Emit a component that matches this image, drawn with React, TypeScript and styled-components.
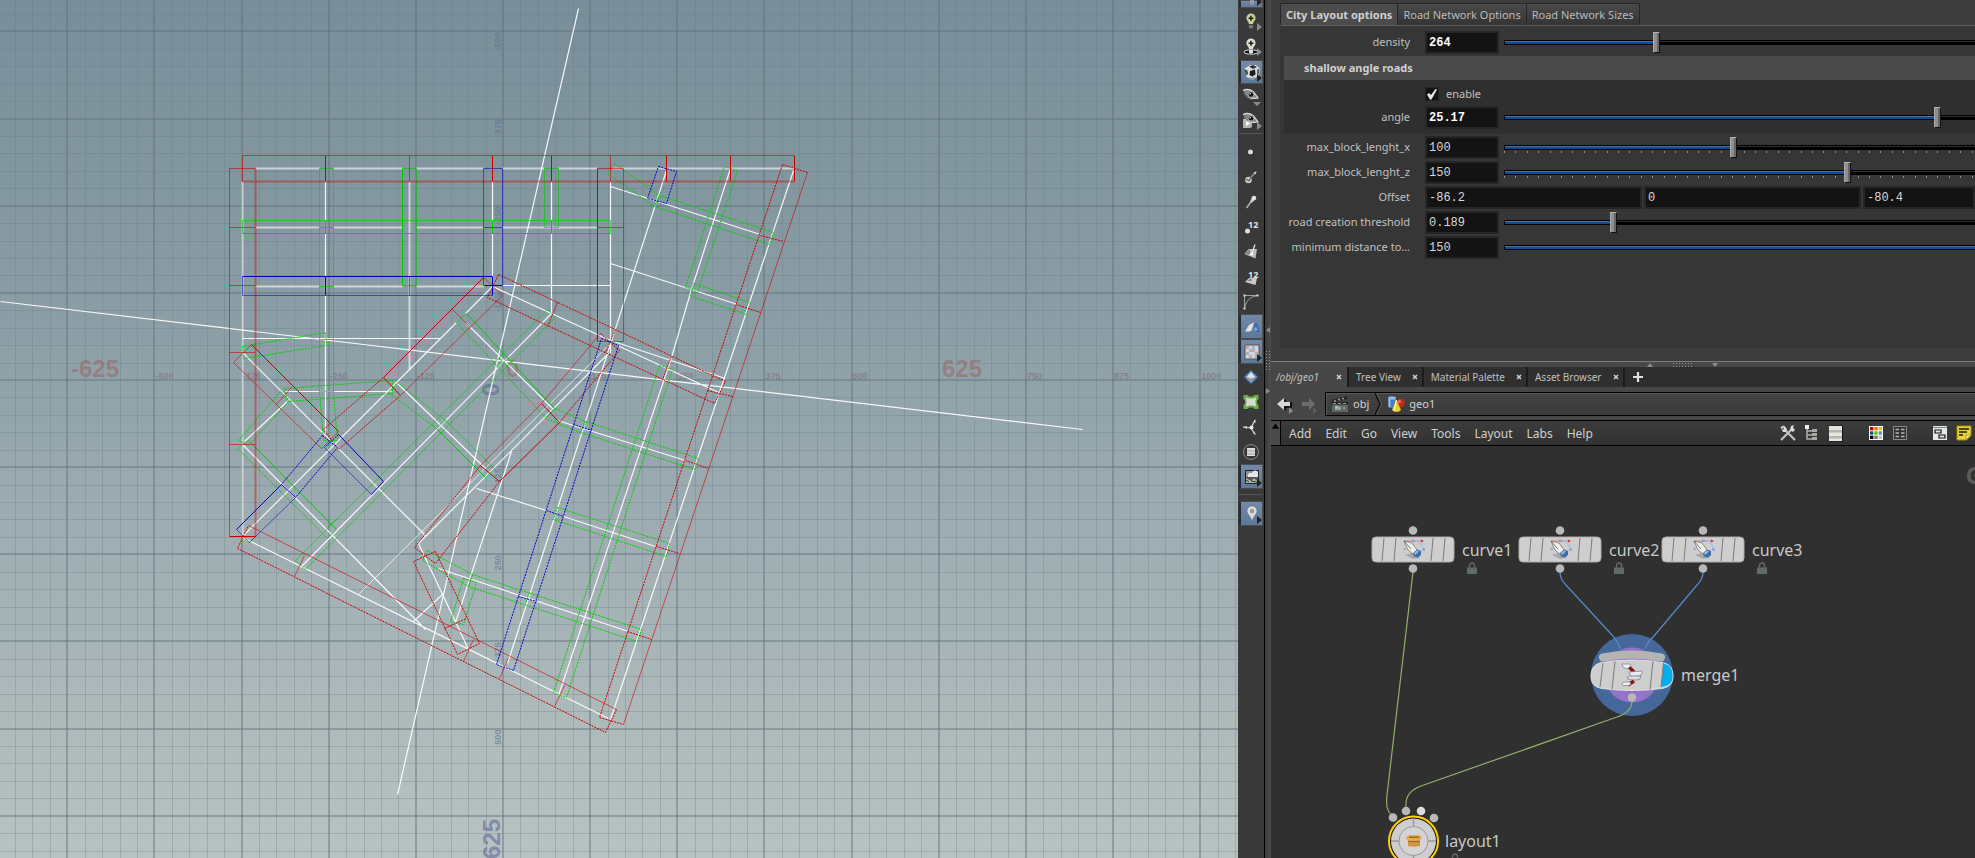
import React from "react";
import styled, { createGlobalStyle, css } from "styled-components";

const GlobalStyle = createGlobalStyle`
  *, *::before, *::after { box-sizing: border-box; }
  body { margin: 0; background: #3a3a3a; overflow: hidden; }
  button, input { font: inherit; color: inherit; margin: 0; }
`;

const ui = `"Noto Sans", "Open Sans", sans-serif`;
const mono = `"Liberation Mono", monospace`;

/* ------------------------------------------------------------------ */
/* Shell                                                               */
/* ------------------------------------------------------------------ */

const Shell = styled.div`
  display: flex;
  height: 100vh;
  overflow: hidden;
  font-family: ${ui};
  font-size: 11px;
  line-height: 16px;
  color: #c0c0c0;
`;

const Viewport = styled.main`
  flex: 1238 1 0;
  min-width: 0;
  background: linear-gradient(#788e9a 0%, #7f949d 15%, #899ca3 33%, #93a4ab 48%, #a1afb4 65%, #aebaba 84%, #b8c2c2 100%);
`;

const Scene = styled.svg`
  display: block;
  width: 100%;
  height: 100%;
`;

const SidePanes = styled.div`
  flex: 704 1 0;
  min-width: 0;
  display: flex;
  flex-direction: column;
`;

/* ------------------------------------------------------------------ */
/* Scene view                                                          */
/* ------------------------------------------------------------------ */

type Pt = [number, number];
const STEP = 87.15;
const OX = 503;
const OY = 380;

const gridLines = (origin: number, max: number) => {
  const out: { at: number; major: boolean }[] = [];
  for (let i = -40; i < 60; i++) {
    const at = Math.round(origin + (i * STEP) / 5);
    if (at >= 0 && at <= max) out.push({ at, major: i % 5 === 0 });
  }
  return out;
};

const path = (pts: Pt[], close = false) =>
  "M" + pts.map((p) => p.join(" ")).join("L") + (close ? "Z" : "");

const seg = (x1: number, y1: number, x2: number, y2: number) => path([[x1, y1], [x2, y2]]);

const whiteThin = [
  seg(325, 181, 325, 433), seg(492, 181, 492, 285), seg(551, 181, 551, 313),
  seg(0, 301, 1082, 429), seg(578, 8, 397, 794),
  seg(492, 286, 465, 313), seg(456, 322, 242, 536),
  seg(242, 352, 426, 536), seg(242, 444, 425, 629),
  seg(551, 313, 300, 567), seg(466, 323, 553, 409), seg(397, 383, 485, 468),
  seg(285, 391, 391, 391), seg(288, 400, 244, 441),
  seg(418, 543, 608, 353), seg(418, 543, 468, 649), seg(242, 537, 608, 718),
  seg(413, 621, 443, 593), seg(476, 488, 546, 510), seg(563, 516, 655, 546),
  seg(511, 451, 455, 622), seg(666, 170, 507, 663),
  path([[730, 168], [691, 289], [671, 357], [558, 695]]),
  seg(793, 170, 610, 719), seg(610, 186, 760, 234), seg(610, 263, 737, 304),
  seg(492, 286, 610, 340), seg(610, 340, 725, 378), seg(617, 345, 718, 392),
  seg(557, 420, 685, 460), seg(438, 568, 628, 631), seg(242, 338, 440, 338),
  seg(502, 285, 610, 285), seg(610, 181, 610, 353),
].join("");

const whiteSoft = [
  ...[168, 227, 286].map((y) =>
    [[255, 319], [333, 402], [416, 483]].map(([a, b]) => seg(a, y, b, y)).join("")
  ),
  seg(502, 168, 544, 168), seg(558, 168, 597, 168), seg(612, 168, 794, 168),
  seg(502, 227, 597, 227),
  seg(242, 181, 242, 535), seg(409, 181, 409, 369),
].join("");

const whiteFaint = seg(358, 594, 610, 343);

const redSolid = [
  ...[325, 492, 551, 666, 730, 794].map((x) => seg(x, 155, x, 181)),
  seg(229, 536, 255, 536), seg(597, 168, 597, 341), seg(483, 277, 383, 377),
  seg(383, 377, 400, 395), seg(251, 344, 338, 431), seg(541, 403, 559, 422),
  seg(559, 422, 499, 481), seg(480, 465, 499, 481),
].join("");

const redSoft = [
  seg(242, 155, 794, 155), seg(242, 155, 242, 181), seg(409, 155, 409, 181), seg(610, 155, 610, 181),
  seg(229, 168, 229, 536), seg(229, 168, 255, 168),
  ...[227, 285, 352, 444].map((y) => seg(229, y, 255, y)),
  path([[597, 168], [623, 168], [623, 341], [597, 341]]), seg(597, 227, 623, 227),
  seg(807, 172, 623, 724), seg(248, 525, 616, 709),
  path([[483, 277], [502, 295], [400, 395]]), seg(452, 309, 470, 327),
  path([[251, 344], [233, 362], [321, 448], [338, 431]]), seg(291, 387, 276, 404),
  seg(600, 333, 541, 403), seg(541, 403, 480, 465),
  seg(304, 555, 294, 576), seg(473, 639, 463, 661), seg(508, 657, 499, 678), seg(564, 685, 554, 706),
].join("");

const redWide = seg(242, 181, 794, 181) + seg(255, 168, 255, 536);

const redDash = [
  path([[807, 172], [782, 164], [599, 717], [623, 724]]),
  seg(760, 235, 783, 241), seg(736, 304, 760, 312), seg(685, 460, 708, 468),
  seg(656, 546, 679, 553), seg(627, 631, 651, 639), seg(707, 390, 732, 396),
  path([[616, 709], [605, 732], [237, 548], [248, 525]]),
  path([[498, 274], [725, 381], [714, 403], [487, 297]], true),
  seg(557, 302, 547, 326), seg(615, 329, 605, 352), seg(671, 356, 662, 379),
  path([[383, 377], [323, 429], [338, 449], [400, 395]]),
  path([[600, 333], [619, 350], [559, 422]]),
  path([[480, 465], [414, 547], [435, 563], [499, 481]]),
  path([[435, 551], [413, 561], [457, 654], [479, 643]], true), seg(444, 628, 466, 618),
].join("");

const greenSolid = [
  seg(402, 168, 402, 285), seg(242, 233, 610, 233),
  ...[325, 492, 551].map((x) => seg(x, 220, x, 233)),
  seg(466, 313, 554, 408), seg(248, 440, 336, 529), seg(436, 428, 485, 477),
].join("");

const greenSoft = [
  path([[319, 393], [319, 168], [333, 168], [333, 393]]),
  ...[227, 286, 339, 391].map((y) => seg(319, y, 333, y)),
  path([[402, 168], [416, 168], [416, 285], [402, 285]]),
  path([[242, 233], [242, 220], [610, 220], [610, 233]]),
  path([[544, 168], [558, 168], [558, 227], [544, 227]], true),
  path([[547, 309], [555, 317], [305, 569], [295, 560]], true),
  path([[554, 408], [545, 417], [456, 322], [466, 313]]),
  path([[336, 529], [327, 538], [237, 448], [248, 440]]),
  seg(436, 428, 445, 420), seg(445, 420, 494, 468), seg(494, 468, 485, 477),
  seg(498, 358, 508, 367), seg(498, 367, 508, 357), seg(327, 526, 337, 518),
].join("");

const greenDash = [
  path([[319, 393], [323, 440], [337, 440], [333, 393]]),
  path([[242, 346], [325, 332], [326, 345], [243, 358]], true),
  path([[284, 388], [392, 380], [392, 393], [287, 401]], true),
  path([[280, 391], [289, 400], [248, 445], [238, 440]], true),
  path([[445, 420], [397, 382], [388, 392], [436, 428]]),
  path([[614, 163], [607, 173], [654, 206], [659, 195]], true),
  path([[659, 195], [773, 232], [769, 244], [654, 206]], true),
  path([[724, 166], [737, 170], [697, 292], [685, 287]], true),
  path([[693, 283], [750, 302], [746, 314], [690, 296]], true),
  path([[555, 408], [585, 421], [580, 432], [545, 418]], true),
  path([[585, 421], [698, 458], [694, 469], [580, 432]], true),
  path([[659, 365], [672, 369], [566, 697], [553, 692]], true),
  path([[557, 507], [669, 543], [666, 556], [553, 519]], true),
  path([[427, 550], [472, 574], [468, 586], [422, 560]], true),
  path([[472, 574], [641, 629], [637, 641], [468, 586]], true),
  path([[463, 578], [476, 582], [463, 624], [450, 621]], true),
  seg(529, 592, 525, 603),
].join("");

const blueSolid = [
  seg(242, 276, 492, 276), seg(325, 276, 325, 295), seg(492, 276, 492, 295),
  seg(281, 484, 236, 529), seg(338, 434, 383, 481), seg(383, 481, 371, 494),
  seg(281, 484, 295, 497), seg(484, 285, 502, 285),
].join("");

const blueSoft = [
  path([[242, 276], [242, 295], [492, 295]]), seg(409, 276, 409, 295),
  path([[483, 285], [483, 168], [502, 168], [502, 285]]), seg(483, 227, 502, 227),
  seg(324, 447, 371, 494), path([[236, 529], [249, 542], [295, 497]]),
].join("");

const blueDash = [
  path([[658, 166], [676, 171], [666, 203], [647, 198]], true),
  path([[601, 338], [618, 345], [513, 670], [496, 664]], true),
  seg(573, 424, 591, 430), seg(546, 510, 563, 516), seg(518, 596, 536, 601),
  path([[322, 435], [337, 447], [295, 497]]), seg(322, 435, 281, 484), seg(338, 434, 324, 447),
].join("");

const xLabels = [-500, -375, -250, -125, 125, 250, 375, 500, 750, 875, 1000];
const zLabels = [-500, -375, -250, -125, 125, 250, 375, 500];

const SceneView = () => (
  <Viewport aria-label="Scene view">
    <Scene viewBox="0 0 1238 858" preserveAspectRatio="xMinYMin slice">
      <g fill="none">
        {gridLines(OX, 1238).map(({ at, major }) => (
          <path key={"v" + at} d={`M${major ? at : at + 0.5} 0V900`} stroke={major ? "#60727d" : "#657b86"} strokeWidth={major ? 2 : 1} strokeOpacity={major ? 0.45 : 0.3} />
        ))}
        {gridLines(OY, 858).map(({ at, major }) => (
          <path key={"h" + at} d={`M0 ${major ? at : at + 0.5}H1238`} stroke={major ? "#60727d" : "#657b86"} strokeWidth={major ? 2 : 1} strokeOpacity={major ? 0.45 : 0.3} />
        ))}
      </g>
      <g fontFamily='"Liberation Sans", sans-serif' fontWeight="bold" fontSize="9" fill="#806a72" fillOpacity="0.6">
        {xLabels.map((n) => (
          <text key={n} x={OX + (n / 125) * STEP + 1} y={OY - 1}>{n}</text>
        ))}
        <g fontSize="24" fill="#9a696b" fillOpacity="0.62">
          <text x={71} y={377}>-625</text>
          <text x={506} y={377}>0</text>
          <text x={942} y={377}>625</text>
        </g>
      </g>
      <g fontFamily='"Liberation Sans", sans-serif' fontWeight="bold" fontSize="9" fill="#616b88" fillOpacity="0.6" textAnchor="end">
        {zLabels.map((n) => (
          <text key={n} transform={`translate(501 ${OY + (n / 125) * STEP + 1}) rotate(-90)`}>{n}</text>
        ))}
        <g fontSize="24" fill="#62699a" fillOpacity="0.62">
          <text transform="translate(499 383) rotate(-90)">0</text>
          <text transform="translate(500 819) rotate(-90)">625</text>
        </g>
      </g>
      <g fill="none" transform="translate(0.5 0.5)" strokeWidth="1">
        <path d={whiteSoft} stroke="#fff" strokeWidth="2" strokeOpacity="0.58" />
        <path d={whiteFaint} stroke="#fff" strokeOpacity="0.7" />
        <path d={whiteThin} stroke="#fff" strokeWidth="1.2" strokeOpacity="0.92" />
        <path d={greenSoft} stroke="#0c0" strokeOpacity="0.62" />
        <path d={greenDash} stroke="#00d200" strokeDasharray="2 1" />
        <path d={greenSolid} stroke="#00c800" />
        <path d={redWide} stroke="#c80000" strokeOpacity="0.4" strokeWidth="2" />
        <path d={redSoft} stroke="#d00000" strokeOpacity="0.58" />
        <path d={redDash} stroke="#d00000" strokeDasharray="2 1" />
        <path d={redSolid} stroke="#c80000" />
        <path d={blueSoft} stroke="#0000c8" strokeOpacity="0.55" />
        <path d={blueDash} stroke="#0000c8" strokeDasharray="2 1" />
        <path d={blueSolid} stroke="#0000c8" />
      </g>
    </Scene>
  </Viewport>
);

/* ------------------------------------------------------------------ */
/* Display options toolbar                                             */
/* ------------------------------------------------------------------ */

const Toolbar = styled.nav`
  flex: none;
  width: 27px;
  display: flex;
  flex-direction: column;
  background: #393939;
  border-right: 1px solid #000;
  overflow: hidden;
`;

const Tool = styled.button<{ $on?: boolean; $h?: number }>`
  position: relative;
  flex: none;
  height: ${(p) => p.$h ?? 25}px;
  width: 24px;
  margin-left: 1px;
  padding: 0;
  border: 1px solid transparent;
  background: none;
  display: flex;
  align-items: ${(p) => (p.$h === 8 ? "flex-end" : "center")};
  justify-content: center;
  ${(p) => p.$on && css`
    background: linear-gradient(#7389a8, #5d7898);
    border-color: #4c4c4c #555 #4c4c4c #232b36;
    border-left-width: 2px;
  `}
  svg { display: block; overflow: visible; }
`;

const Corner = styled.span<{ $on?: boolean; $down?: boolean }>`
  position: absolute;
  right: ${(p) => (p.$down ? 1 : 0)}px;
  bottom: 1px;
  border: solid transparent;
  ${(p) => p.$down
    ? css`border-width: 4px 4px 0 4px; border-top-color: #8c8c8c;`
    : css`border-width: 4px 0 4px 5px; border-left-color: ${p.$on ? "#222" : "#8c8c8c"};`}
`;

const Rule = styled.hr`
  flex: none;
  width: 24px;
  height: 1px;
  margin: 0 0 5px 1px;
  border: 0;
  background: #555;
`;

const Spacer = styled.div<{ $h: number }>`
  flex: none;
  height: ${(p) => p.$h}px;
`;

const Ico = ({ children, w = 18 }: { children: React.ReactNode; w?: number }) => (
  <svg width={w} height={w} viewBox="0 0 18 18" aria-hidden="true">{children}</svg>
);

const Bulb = ({ base }: { base?: boolean }) => (
  <Ico>
    {base && <ellipse cx="9" cy="15" rx="7" ry="2.2" fill="#111" stroke="#ddd" />}
    <path d="M9 1.5a4.6 4.6 0 0 0-4.6 4.6c0 2.6 2.3 3.2 2.6 6h4c.3-2.8 2.6-3.4 2.6-6A4.6 4.6 0 0 0 9 1.5z" fill={base ? "#dcdcd0" : "#c9ce94"} />
    <path d="M9 3.8v5M6.5 6.3h5" stroke="#222" strokeWidth="1.6" />
    <path d="M7 13h4v2.4l-1 1.2H8l-1-1.2z" fill={base ? "#e0e0e0" : "#777"} />
  </Ico>
);

const Digits = () => (
  <text x="6" y="10" fontSize="9" fontWeight="bold" fill="#e0e0e0" fontFamily={ui}>12</text>
);

const Eye = () => (
  <>
    <path d="M1 3.5c3-2.5 7-2 10 1l5 6.5c-4 1-9 0-12-3z" fill="#7f8583" />
    <path d="M1 3.5c4-2 8-1 10.5 1.5l4.5 6c-3 .8-6 .6-9-1" fill="none" stroke="#dedede" strokeWidth="1.2" />
    <circle cx="9" cy="7.5" r="2.9" fill="#151515" stroke="#ccc" strokeWidth=".8" />
    <circle cx="8.3" cy="6.8" r=".8" fill="#eee" />
    <path d="M2 6l3 4 5 2.5" fill="none" stroke="#8a8a8a" />
  </>
);

type ToolSpec = { name: string; on?: boolean; corner?: "r" | "d"; h?: number; icon: React.ReactNode };

const topTools: ToolSpec[] = [
  { name: "Headlight", on: true, corner: "r", h: 8, icon: <Ico><path d="M7 11h4v3l-1 2H8l-1-2z" fill="#999" /></Ico> },
  { name: "Normal lighting", corner: "r", icon: <Bulb /> },
  { name: "High quality lighting", corner: "r", icon: <Bulb base /> },
];

const midTools: ToolSpec[] = [
  { name: "Shading mode", on: true, corner: "r", h: 24, icon: (
    <Ico>
      <path d="M1.5 5.5L7 2h6l4 3.500-1 7L9 17l-5.500-3z" fill="#dcdcdc" />
      <path d="M6 3.500L10 2l4 2-4 2z" fill="#333" />
      <path d="M1.5 6l3 1.500.5 4-2 .5z" fill="#444" />
      <path d="M7 8l5-1.500.5 5L9 13.500 6.500 12z" fill="#1c1c1c" />
      <path d="M14 6.500l2.500-1-.5 5-2 2z" fill="#6a6a6a" />
      <path d="M5 14.500l3.500.5 4-1.500L9 17z" fill="#8a8a8a" />
    </Ico>) },
  { name: "Visibility", corner: "d", h: 24, icon: <Ico><Eye /></Ico> },
  { name: "Camera view", corner: "r", h: 24, icon: (
    <Ico><Eye /><path d="M1 8h3l1 1.5h5V16l-2 1H1z" fill="#b4b4ae" /><path d="M4 10l4.5 2.5L4 15z" fill="#fff" /></Ico>) },
];

const lowTools: ToolSpec[] = [
  { name: "Points", icon: <Ico><circle cx="9" cy="9.5" r="3" fill="#222" /><circle cx="8.5" cy="9" r="2.5" fill="#ddd" /></Ico> },
  { name: "Point normals", icon: <Ico><path d="M7 11l7-7" stroke="#8fa39b" strokeWidth="1.5" /><path d="M14.5 3.5l-3 1 2 2z" fill="#cfd8d4" /><circle cx="6.5" cy="12" r="3.3" fill="#c8c8c8" /><path d="M4 11l3 2 2-4" stroke="#444" fill="none" /></Ico> },
  { name: "Point trails", icon: <Ico><path d="M4.5 15l5-7" stroke="#aaa" strokeWidth="1.6" /><path d="M8 9l2-5 3 0-1 4-3 2z" fill="#ccc" /><circle cx="12" cy="5" r="2.3" fill="#e2e2e2" /></Ico> },
  { name: "Point numbers", icon: <Ico><Digits /><circle cx="5.5" cy="13" r="2.5" fill="#ddd" /></Ico> },
  { name: "Primitive normals", icon: <Ico><path d="M2.5 11l4-5h8.5l-1.5 9.5z" fill="#bdbdbd" /><path d="M10 10l3-8.5" stroke="#eee" strokeWidth="1.2" /><path d="M7 6l2 5-6 .5z" fill="#858585" /><circle cx="9.5" cy="11" r="1.5" fill="#fff" /></Ico> },
  { name: "Primitive numbers", icon: <Ico><path d="M3 14l4-4h8L13.5 17z" fill="#c9c9c9" /><path d="M5 13l4-3 1 3z" fill="#888" /><Digits /></Ico> },
  { name: "Hulls", icon: <Ico><path d="M2.5 16V2.5h13M3 14C4 8 8 4 14 3" fill="none" stroke="#9aa8a2" /><path d="M1.5 1.5h2v2h-2zM14.5 1.5h2v2h-2zM1.5 14.5h2v2h-2z" fill="#ddd" /></Ico> },
  { name: "Backface tint", on: true, icon: <Ico><path d="M10 13l3-9 3.5 10z" fill="#2b5fb0" /><path d="M10 13l3-5 2 4.5z" fill="#79a8e6" /><path d="M2 13.5l4-6.5 5-2.5-2.5 8-2 1z" fill="#e4e2da" /></Ico> },
  { name: "Textures", on: true, corner: "r", icon: (
    <Ico>
      <path d="M2 2h14v14H2z" fill="#d6d6d6" stroke="#555" />
      <path d="M3 3h3v3H3zM9 6h3v3H9zM6 12h3v3H6zM12 9h3v3h-3z" fill="#cfa3a3" />
      <path d="M9 3h3v3H9zM3 9h3v3H3zM12 12h3v3h-3zM6 6h3v3H6z" fill="#9ab2cf" />
    </Ico>) },
  { name: "Materials", icon: <Ico><path d="M9 2l7 7-7 7-7-7z" fill="#4d85c4" /><path d="M9 4l4.500 5L9 14 4.500 9z" fill="#dfe3e4" /><path d="M4.500 9L9 10.500 13.500 9 9 14z" fill="#8f979a" /></Ico> },
  { name: "Packed geometry", icon: <Ico><path d="M1.500 2h4l1.500 1.500h4L12.500 2h4v4L15 7.500v3l1.500 1.500v4h-4L11 14.500H7L5.500 16h-4v-4L3 10.500v-3L1.500 6z" fill="#6aae45" /><path d="M4 4.500l3 1h4l3-1-.5 4.500.5 4.500-3-1H7l-3 1L4.500 9z" fill="#d2dccf" /></Ico> },
  { name: "Origin gnomon", icon: <Ico><path d="M9 10L13 2M9 10l4 6.5M9 10L1 9" stroke="#d8d8d8" strokeWidth="1.2" /><circle cx="9.5" cy="9.5" r="2" fill="#eee" /><path d="M12 5l1.5-4v4zM12 13l2 4-3-2zM5 8L1 9l4 2z" fill="#ccc" /></Ico> },
  { name: "Group list", icon: <Ico><circle cx="9" cy="9" r="7.5" fill="none" stroke="#8a8a8a" /><path d="M5 5h8v8H5z" fill="#ddd" /><path d="M5 8h8M5 11h8" stroke="#999" /></Ico> },
  { name: "Background image", on: true, corner: "r", icon: <Ico><path d="M2.5 2.5h13v13h-13z" fill="#555" stroke="#222" /><path d="M3 3h12v6H3z" fill="#8c918c" /><path d="M5 9a3 3 0 0 1 4-4 3 3 0 0 1 6 1v3z" fill="#e6e6e6" /><path d="M3 15v-5l4 2.5 3-2.5 5 3v2z" fill="#b2b8b0" /><path d="M3 12l3 2M10 10l-2 3 6 1" stroke="#333" fill="none" /></Ico> },
];

const pinTool: ToolSpec = {
  name: "Visualizers", on: true, corner: "r",
  icon: <Ico><path d="M9 1a5 5 0 0 0-5 5c0 3 4 5 5 11 1-6 5-8 5-11a5 5 0 0 0-5-5z" fill="#dcdcdc" stroke="#666" strokeWidth=".5" /><circle cx="9" cy="6" r="2.2" fill="#8a9aa8" /></Ico>,
};

const ToolButton = ({ t }: { t: ToolSpec }) => (
  <Tool type="button" aria-label={t.name} aria-pressed={!!t.on} $on={t.on} $h={t.h}>
    {t.icon}
    {t.corner && <Corner $on={t.on} $down={t.corner === "d"} />}
  </Tool>
);

const DisplayToolbar = () => (
  <Toolbar aria-label="Display options">
    {topTools.map((t) => <ToolButton key={t.name} t={t} />)}
    <Spacer $h={2} />
    {midTools.map((t) => <ToolButton key={t.name} t={t} />)}
    <Spacer $h={1} />
    <Rule />
    {lowTools.map((t) => <ToolButton key={t.name} t={t} />)}
    <Spacer $h={5} />
    <Rule />
    <Spacer $h={1} />
    <ToolButton t={pinTool} />
  </Toolbar>
);

/* ------------------------------------------------------------------ */
/* Splitters                                                           */
/* ------------------------------------------------------------------ */

const SplitV = styled.div`
  flex: none;
  width: 6px;
  display: flex;
  flex-direction: column;
  align-items: center;
  gap: 17px;
  padding-top: 327px;
  background: linear-gradient(90deg, #3c3c3c, #4d4d4d);
  overflow: hidden;
`;

const SplitH = styled.div`
  flex: none;
  height: 6px;
  display: flex;
  align-items: center;
  justify-content: center;
  gap: 19px;
  padding-left: 118px;
  background: #484848;
  border-top: 1px solid #7d7d7d;
`;

const Tri = ({ d }: { d: string }) => (
  <svg width="6" height="6" viewBox="0 0 6 6" aria-hidden="true"><path d={d} fill="#8c8c8c" /></svg>
);

const Grip = styled.span<{ $v?: boolean }>`
  width: ${(p) => (p.$v ? 6 : 21)}px;
  height: ${(p) => (p.$v ? 21 : 5)}px;
  background-image: radial-gradient(circle, #8f8f8f 1px, transparent 1px);
  background-size: 3px 3px;
`;

/* ------------------------------------------------------------------ */
/* Parameter pane                                                      */
/* ------------------------------------------------------------------ */

const ParamPane = styled.section`
  flex: none;
  height: 361px;
  padding: 3px 0 13px 9px;
  background: #3d3d3d;
  overflow: hidden;
  display: flex;
  flex-direction: column;
`;

const FolderTabs = styled.div`
  display: flex;
  flex: none;
  height: 23px;
  border-bottom: 1px solid #5c5c5c;
`;

const FolderTab = styled.button<{ $active?: boolean }>`
  height: 22px;
  padding: 0 5px;
  border: 1px solid #262626;
  border-left-width: ${(p) => (p.$active ? 1 : 0)}px;
  border-bottom: 0;
  background: ${(p) => (p.$active ? "#4c4c4c" : "linear-gradient(#4a4a4a, #343434)")};
  color: ${(p) => (p.$active ? "#d0d0d0" : "#bababa")};
  font-weight: ${(p) => (p.$active ? 700 : 400)};
  white-space: nowrap;
`;

const ParamBody = styled.form`
  flex: 1;
  display: flex;
  flex-direction: column;
  gap: 2px;
  padding: 5px 0 0 4px;
  background: #363636;
`;

const ParamRow = styled.div`
  display: flex;
  align-items: center;
  height: 23px;
`;

const ParamLabel = styled.label`
  flex: none;
  width: 126px;
  margin-right: 15px;
  padding-bottom: 2px;
  text-align: right;
  white-space: nowrap;
`;

const NumberField = styled.input<{ $bold?: boolean; $wide?: boolean }>`
  width: ${(p) => (p.$wide ? "100%" : "74px")};
  flex: none;
  min-width: 0;
  height: 23px;
  padding: 1px 0 0 2px;
  border: 2px solid #262626;
  border-radius: 0;
  background: #131313;
  color: ${(p) => (p.$bold ? "#fff" : "#d8d8d8")};
  font-family: ${mono};
  font-size: 12px;
  font-weight: ${(p) => (p.$bold ? 700 : 400)};
  outline: 0;
`;

const Triple = styled.div`
  flex: 1;
  display: grid;
  grid-template-columns: 217fr 217fr 112fr;
  gap: 2px;
`;

const SliderBox = styled.div`
  position: relative;
  flex: 1;
  min-width: 0;
  height: 23px;
  margin-left: 5px;
`;

const Slider = styled.input<{ $full?: boolean }>`
  appearance: none;
  display: block;
  width: 100%;
  height: 22px;
  background: none;
  &::-webkit-slider-runnable-track {
    height: 5px;
    border: solid #000;
    border-width: 1px 0 1px 1px;
    background:
      linear-gradient(#56708c 1px, #0a4c9c 1px) 0 0 / var(--fill) 100% no-repeat,
      linear-gradient(#2e2e2e 1px, #000 1px);
  }
  &::-webkit-slider-thumb {
    appearance: none;
    width: 7px;
    height: 21px;
    margin-top: -9px;
    border: 1px solid;
    border-color: #b4b4b4 #111 #111 #aaa;
    background: linear-gradient(90deg, #8e8e8e 3px, #666 3px);
    opacity: ${(p) => (p.$full ? 0 : 1)};
  }
`;

const Ticks = styled.div`
  position: absolute;
  left: 0;
  right: 2px;
  top: 15px;
  height: 2px;
  display: flex;
  justify-content: space-between;
  pointer-events: none;
  i { width: 1px; background: #8e8e8e; }
`;

const GroupHeader = styled.h2`
  flex: none;
  height: 24px;
  margin: 0;
  padding-left: 20px;
  background: #4a4a4a;
  color: #d0d0d0;
  font-size: 11px;
  line-height: 24px;
  font-weight: 700;
`;

const GroupBody = styled.div`
  flex: none;
  height: 54px;
  display: flex;
  flex-direction: column;
  gap: 1px;
  padding-top: 2px;
  background: #2f2f2f;
`;

const CheckLabel = styled.label`
  display: flex;
  align-items: center;
  gap: 7px;
  margin-left: 141px;
`;

const CheckBox = styled.input`
  appearance: none;
  width: 14px;
  height: 14px;
  border: 1px solid #222;
  background: #131313
    url("data:image/svg+xml,%3Csvg xmlns='http://www.w3.org/2000/svg' viewBox='0 0 12 12'%3E%3Cpath d='M1 6.500l2-1.500 2 2L9.500 1l1.500.5L5.500 11.500H4z' fill='%23e6e6e6'/%3E%3C/svg%3E")
    center / 12px 12px no-repeat;
`;

type ParamProps = { id: string; label: string; value: string; pos: number; bold?: boolean; ticks?: boolean; full?: boolean };

const Param = ({ id, label, value, pos, bold, ticks, full }: ParamProps) => (
  <ParamRow>
    <ParamLabel htmlFor={id}>{label}</ParamLabel>
    <NumberField id={id} defaultValue={value} $bold={bold} />
    <SliderBox>
      <Slider
        type="range" min={0} max={1000} defaultValue={pos} $full={full}
        aria-label={`${label} slider`}
        style={{ "--fill": `${pos / 10}%` } as React.CSSProperties}
      />
      {ticks && <Ticks>{Array.from({ length: 42 }, (_, i) => <i key={i} />)}</Ticks>}
    </SliderBox>
  </ParamRow>
);

const Parameters = () => (
  <ParamPane aria-label="Parameters">
    <FolderTabs role="tablist">
      <FolderTab type="button" role="tab" aria-selected $active>City Layout options</FolderTab>
      <FolderTab type="button" role="tab">Road Network Options</FolderTab>
      <FolderTab type="button" role="tab">Road Network Sizes</FolderTab>
    </FolderTabs>
    <ParamBody>
      <Param id="density" label="density" value="264" pos={319} bold />
      <div>
        <GroupHeader>shallow angle roads</GroupHeader>
        <GroupBody>
          <ParamRow>
            <CheckLabel><CheckBox type="checkbox" defaultChecked />enable</CheckLabel>
          </ParamRow>
          <Param id="angle" label="angle" value="25.17" pos={926} bold />
        </GroupBody>
      </div>
      <Param id="mbx" label="max_block_lenght_x" value="100" pos={485} ticks />
      <Param id="mbz" label="max_block_lenght_z" value="150" pos={733} ticks />
      <ParamRow>
        <ParamLabel htmlFor="offx">Offset</ParamLabel>
        <Triple>
          <NumberField id="offx" $wide defaultValue="-86.2" />
          <NumberField aria-label="Offset y" $wide defaultValue="0" />
          <NumberField aria-label="Offset z" $wide defaultValue="-80.4" />
        </Triple>
      </ParamRow>
      <Param id="thr" label="road creation threshold" value="0.189" pos={226} />
      <Param id="mind" label="minimum distance to…" value="150" pos={1000} full />
    </ParamBody>
  </ParamPane>
);

/* ------------------------------------------------------------------ */
/* Network pane                                                        */
/* ------------------------------------------------------------------ */

const NetworkPane = styled.section`
  flex: 1;
  min-height: 0;
  display: flex;
  flex-direction: column;
  background: #464646;
`;

const PaneTabs = styled.div`
  flex: none;
  height: 20px;
  margin-bottom: 5px;
  display: flex;
  background: #2d2d2d;
`;

const PaneTab = styled.div<{ $active?: boolean }>`
  display: flex;
  align-items: center;
  gap: ${(p) => (p.$active ? 17 : 11)}px;
  padding: 0 ${(p) => (p.$active ? 5 : 4)}px 0 ${(p) => (p.$active ? 5 : 7)}px;
  background: ${(p) => (p.$active ? "#464646" : "#2f2f2f")};
  border-right: 2px solid #1c1c1c;
  button {
    padding: 0;
    border: 0;
    background: none;
    font-size: 10px;
    font-style: ${(p) => (p.$active ? "italic" : "normal")};
    white-space: nowrap;
  }
  button + button { line-height: 0; }
`;

const AddTab = styled.button`
  padding: 0;
  margin-left: 8px;
  border: 0;
  background: none;
  line-height: 0;
`;

const PathRow = styled.div`
  flex: none;
  height: 24px;
  display: flex;
  align-items: center;
`;

const NavButton = styled.button<{ $dim?: boolean }>`
  width: 24px;
  height: 24px;
  padding: 0;
  margin-left: ${(p) => (p.$dim ? 0 : 4)}px;
  margin-right: ${(p) => (p.$dim ? 2 : 0)}px;
  border: 0;
  background: none;
  opacity: ${(p) => (p.$dim ? 0.3 : 1)};
`;

const PathField = styled.div`
  flex: 1;
  height: 24px;
  display: flex;
  align-items: center;
  background: linear-gradient(#444, #3a3a3a);
  border: solid #000;
  border-width: 1px 0 1px 1px;
  box-shadow: inset 1px 1px 0 #5a5a5a;
`;

const PathPart = styled.button`
  display: flex;
  align-items: center;
  gap: 4px;
  padding: 0 5px;
  border: 0;
  background: none;
  color: #d4d4d4;
  font-size: 11px;
`;

const MenuBar = styled.div`
  flex: none;
  height: 26px;
  margin-top: 4px;
  display: flex;
  align-items: center;
  background: linear-gradient(#3c3c3c, #323232);
  border: solid #000;
  border-width: 1px 0;
`;

const Fold = styled.button`
  width: 10px;
  height: 24px;
  padding: 0;
  margin-right: 8px;
  border: 0;
  border-right: 1px solid #000;
  background: #4a4a4a;
  line-height: 0;
  display: flex;
  svg { margin: 2px 1px; }
`;

const MenuItems = styled.div`
  display: flex;
  gap: 14px;
  flex: 1;
  padding-top: 1px;
`;

const MenuItem = styled.button`
  padding: 0;
  border: 0;
  background: none;
  color: #cfcfcf;
  font-size: 12px;
`;

const IconStrip = styled.div`
  display: flex;
  gap: 6px;
  margin-right: 2px;
`;

const StripButton = styled.button<{ $gap?: boolean }>`
  padding: 0;
  margin-left: ${(p) => (p.$gap ? 16 : 0)}px;
  border: 0;
  background: none;
  line-height: 0;
`;

const closeIcon = (
  <svg width="6" height="6" viewBox="0 0 6 6" aria-hidden="true"><path d="M1 1l4 4M5 1L1 5" stroke="#d0d0d0" strokeWidth="1.5" /></svg>
);

const stripIcons: { name: string; gap?: boolean; icon: React.ReactNode }[] = [
  { name: "Tools", icon: <><path d="M2 16L12 6M5 5l11 11" stroke="#bfc4c0" strokeWidth="2.2" /><path d="M1.5 3l3.5-1.5L8 5 7 8 4 8z" fill="#ddd" /><path d="M4 3l1 2-2 1z" fill="#333" /><path d="M11 6l1-4 3-1-1 3 2 1.5L14 8z" fill="#ddd" /></> },
  { name: "Tree", icon: <><path d="M4 3v12h5M4 7h5M4 11h5" fill="none" stroke="#b0b0a8" strokeWidth="1.5" /><path d="M2 1h4v4H2z" fill="#eee" /><path d="M9 5h5v3H9zM9 9h5v3H9zM9 13h5v3H9z" fill="#a9aaa0" /></> },
  { name: "List", icon: <><path d="M2 1.5h14v16H2z" fill="#111" /><path d="M2 2h13v15H2z" fill="#e4e6e0" /><path d="M2 6h13v2.5H2zM2 12h13v2.5H2z" fill="#b4b8b0" /></> },
  { name: "Colors", gap: true, icon: <>
    <path d="M2 2h14v14H2z" fill="#fff" />
    {["#c40000", "#f07000", "#e8c000", "#274c90", "#63c400", "#5f90c8", "#000", "#777", "#c0c0c0"].map((c, i) => (
      <path key={c} d={`M${3 + (i % 3) * 4.3} ${3 + Math.floor(i / 3) * 4.3}h3.4v3.4h-3.4z`} fill={c} />
    ))}</> },
  { name: "Shapes", icon: <><path d="M2.5 2.5h13v13h-13z" fill="#333" stroke="#8a8a8a" /><path d="M4.5 5.5h3.5M10 5.5h3.5M4.5 9h3.5M10 9h3.5M4.5 12.5h3.5M10 12.5h3.5" stroke="#b4b4b4" strokeWidth="1.5" /></> },
  { name: "Layout", gap: true, icon: <><path d="M2 2h14v14H2z" fill="#e6e6e6" /><path d="M2 3.5h14" stroke="#6f8a88" /><path d="M4 6h6v3H4zM8 11h6v3H8z" fill="none" stroke="#111" strokeWidth="1.2" /></> },
  { name: "Sticky note", icon: <><path d="M2 2h14v9.5L11.5 16H2z" fill="#e6d43c" stroke="#a88a00" /><path d="M4 5h10M4 8h8M4 11h4" stroke="#1c1c00" strokeWidth="1.3" /><path d="M11 16v-5h5z" fill="#f5ec90" stroke="#a88a00" strokeWidth=".7" /></> },
];

/* Node graph */

const Canvas = styled.div`
  position: relative;
  flex: 1;
  min-height: 0;
  overflow: hidden;
  background: #303030;
  color: #c8c8c8;
`;

const Wires = styled.svg`
  position: absolute;
  inset: 0;
  width: 704px;
  height: 420px;
`;

const NodeBox = styled.div<{ $x: number; $y: number }>`
  position: absolute;
  left: ${(p) => p.$x}px;
  top: ${(p) => p.$y}px;
  display: flex;
  gap: 7px;
  svg { display: block; overflow: visible; }
`;

const NodeText = styled.div<{ $drop: number }>`
  display: flex;
  flex-direction: column;
  padding-top: ${(p) => p.$drop}px;
  font-size: 16px;
  line-height: 22px;
  svg { margin: 1px 0 0 4px; }
`;

const ContextMark = styled.span`
  position: absolute;
  right: -8px;
  top: 13px;
  color: #5a5a5a;
  font: bold 24px/32px ${ui};
`;

const Lock = () => (
  <svg width="12" height="13" viewBox="0 0 12 13" aria-hidden="true">
    <path d="M3.5 6V3.5a2.5 2.5 0 0 1 5 0V6" fill="none" stroke="#5f6b68" strokeWidth="1.4" />
    <path d="M1 5.5h10V12H1z" fill="#5f6b68" />
  </svg>
);

const PenIcon = () => (
  <g>
    <path d="M34 19l8 4 7-1-6-6z" fill="#000" opacity=".18" />
    <path d="M33 5h18" stroke="#d88" strokeWidth="1.2" />
    <path d="M50 3.5l3 1.5-3 1.5z" fill="#d03030" />
    <path d="M46 5c4 2 6 5 6 8" fill="none" stroke="#a8c4e8" strokeWidth="1.4" />
    <path d="M32 13l2.5-1.5v3zM51 12.5h3v2h-3zM41 3.5h2.5v2.5H41z" fill="#7aa4d8" />
    <path d="M33 5l8 2 5 7-4 4-5-4z" fill="#f0f0ea" stroke="#666" strokeWidth=".7" />
    <path d="M33 5l7 8" stroke="#555" strokeWidth=".8" />
    <path d="M42 17l4-3.5 4 1.5v4l-3 2.5-4-1z" fill="#3f6ca8" />
    <path d="M43 17l3-2.5 2 1-4 3.5z" fill="#9cbce4" />
  </g>
);

const CurveNode = ({ x, name }: { x: number; name: string }) => (
  <NodeBox $x={x} $y={80}>
    <svg width="84" height="48" viewBox="0 0 84 48" aria-hidden="true">
      <circle cx="42" cy="4.5" r="4.3" fill="#b8b8b8" />
      <circle cx="42" cy="42.5" r="4.3" fill="#b8b8b8" />
      <rect x="1" y="11" width="82" height="25" rx="4" fill="#cecece" stroke="#aaa" />
      <path d="M13 12l-2 23M25 12l-2 23M62 12l-2 23M74 12l-2 23" stroke="#7c7c7c" strokeWidth="1" />
      <g transform="translate(0 10)"><PenIcon /></g>
    </svg>
    <NodeText $drop={13}>
      <span>{name}</span>
      <Lock />
    </NodeText>
  </NodeBox>
);

const Network = () => (
  <NetworkPane aria-label="Network editor">
    <PaneTabs role="tablist">
      {["/obj/geo1", "Tree View", "Material Palette", "Asset Browser"].map((t, i) => (
        <PaneTab key={t} $active={i === 0}>
          <button type="button" role="tab" aria-selected={i === 0}>{t}</button>
          <button type="button" aria-label={`Close ${t}`}>{closeIcon}</button>
        </PaneTab>
      ))}
      <AddTab type="button" aria-label="New tab">
        <svg width="10" height="10" viewBox="0 0 10 10"><path d="M5 0v10M0 5h10" stroke="#e0e0e0" strokeWidth="2.2" /></svg>
      </AddTab>
    </PaneTabs>
    <PathRow>
      <NavButton type="button" aria-label="Back">
        <svg width="24" height="24" viewBox="0 0 24 24">
          <path d="M3 12l7-6v3h6v6h-6v3z" fill="#111" transform="translate(1 1)" />
          <path d="M2 12l7-6v4h6v4H9v4z" fill="#d6d6d6" />
          <path d="M14 15l4 4-4 3z" fill="#8c8c8c" />
        </svg>
      </NavButton>
      <NavButton type="button" aria-label="Forward" $dim>
        <svg width="24" height="24" viewBox="0 0 24 24"><path d="M16 12l-6-6v4H3v4h7v4z" fill="#c8c8c8" /><path d="M14 15l4 4-4 3z" fill="#8c8c8c" /></svg>
      </NavButton>
      <PathField>
        <PathPart type="button">
          <svg width="18" height="18" viewBox="0 0 18 18" aria-hidden="true">
            <path d="M1 7h16v10H1z" fill="#5c6664" />
            <path d="M1 5l15-4v3L1 7z" fill="#222" />
            <path d="M3 5.5l2 1M7 4l2 1M11 3l2 1" stroke="#999" strokeWidth="1.5" />
            <path d="M1 7h16v2.5H1z" fill="#222" /><path d="M2 8.5h3M7 8.5h3M12 8.5h3" stroke="#999" />
            <path d="M4 11.5h6V15H4z" fill="#98a09e" /><path d="M11 13l3-1.5v3z" fill="#98a09e" /><circle cx="5.5" cy="12" r="1.5" fill="#bbb" />
          </svg>
          obj
        </PathPart>
        <svg width="8" height="22" viewBox="0 0 8 22" aria-hidden="true"><path d="M1 0l5 11L1 22" fill="none" stroke="#111" strokeWidth="1.5" /><path d="M2.5 0l5 11-5 11" fill="none" stroke="#5c5c5c" /></svg>
        <PathPart type="button">
          <svg width="18" height="18" viewBox="0 0 18 18" aria-hidden="true">
            <path d="M1 3v8a4 2 0 0 0 8 0V3z" fill="#4f7fb8" /><path d="M2.5 4v8" stroke="#a9c6e8" strokeWidth="1.5" /><ellipse cx="5" cy="3" rx="4" ry="1.8" fill="#93b8e0" />
            <circle cx="13.5" cy="8" r="4.3" fill="#c22a1c" /><circle cx="12.5" cy="6.5" r="1.5" fill="#e87a60" />
            <path d="M9.5 5L5 15c2 2.5 7 2.5 9 0z" fill="#e8cf32" /><path d="M9.5 5L7 15.5" stroke="#fff2a0" strokeWidth="1.5" />
          </svg>
          geo1
        </PathPart>
      </PathField>
    </PathRow>
    <MenuBar>
      <Fold type="button" aria-label="Collapse menu">
        <svg width="8" height="6" viewBox="0 0 8 6"><path d="M4 0l4 6H0z" fill="#000" /></svg>
      </Fold>
      <MenuItems>
        {["Add", "Edit", "Go", "View", "Tools", "Layout", "Labs", "Help"].map((m) => (
          <MenuItem type="button" key={m}>{m}</MenuItem>
        ))}
      </MenuItems>
      <IconStrip>
        {stripIcons.map((s) => (
          <StripButton type="button" key={s.name} aria-label={s.name} $gap={s.gap}>
            <Ico>{s.icon}</Ico>
          </StripButton>
        ))}
      </IconStrip>
    </MenuBar>
    <Canvas>
      <ContextMark aria-hidden="true">G</ContextMark>
      <Wires viewBox="0 0 704 420" aria-hidden="true">
        <circle cx="361" cy="229" r="41" fill="#45679a" />
        <circle cx="361" cy="229" r="27.5" fill="#9474c8" />
        <g fill="none" strokeWidth="1.2">
          <path d="M142 126L116 349C115 360 116 364 120 369" stroke="#93b06c" />
          <path d="M289 126C289 132 291 135 295 139L341 189C346 194 348 198 349 203" stroke="#5a8ac8" />
          <path d="M432 126C432 132 429 136 426 139L383 190C378 195 375 198 374 203" stroke="#5a8ac8" />
          <path d="M361 255C361 263 355 268 346 271L150 340C139 344 134 351 135 361" stroke="#93b06c" />
        </g>
      </Wires>
      <CurveNode x={100} name="curve1" />
      <CurveNode x={247} name="curve2" />
      <CurveNode x={390} name="curve3" />
      <NodeBox $x={319} $y={203}>
        <svg width="84" height="54" viewBox="0 0 84 54" aria-hidden="true">
          <path d="M13 8.5Q42 2.5 71 8.5" fill="none" stroke="#b4b4b4" strokeWidth="8" strokeLinecap="round" />
          <path d="M12 13.5Q42 8.5 72 13.5C80 15 83 20 83 27S80 38 72 39.5Q42 43.5 12 39.5C4 38 1 34 1 27S4 15 12 13.5z" fill="#cecece" stroke="#e0e0e0" />
          <path d="M73.5 14.5C80 16 82.5 20 82.5 27S80 36 71 38z" fill="#00aef0" />
          <path d="M13 14l-3 24M25 12.5l-3 28M63 12.5l-3 28M73.5 14l-2.5 24" stroke="#7c7c7c" />
          <path d="M38 17l6 6M38 36l6-4" stroke="#8a1414" strokeWidth="3.5" />
          <path d="M32 15h8l1 2-4 3-4-2z" fill="#eef0f2" stroke="#778" strokeWidth=".7" />
          <path d="M32 34.5l2-1.5h6l1 2-2 1.5h-6z" fill="#eef0f2" stroke="#778" strokeWidth=".7" />
          <path d="M39 23l13-1v3l-3 2-8 .5z" fill="#e8ecf0" stroke="#778" strokeWidth=".7" />
          <path d="M37 28.5l3-1.5 11 0-1 3-4 1-8-.5z" fill="#d8dce2" stroke="#778" strokeWidth=".7" />
          <circle cx="42" cy="48.5" r="4.3" fill="#b8b8b8" />
        </svg>
        <NodeText $drop={15}><span>merge1</span></NodeText>
      </NodeBox>
      <NodeBox $x={116} $y={360}>
        <svg width="51" height="62" viewBox="0 0 51 62" aria-hidden="true">
          <circle cx="6" cy="11.5" r="4.3" fill="#b8b8b8" />
          <circle cx="19" cy="5" r="4.3" fill="#b8b8b8" />
          <circle cx="34" cy="5" r="4.3" fill="#dcdcdc" />
          <circle cx="47" cy="12" r="4.3" fill="#b8b8b8" />
          <circle cx="26.5" cy="35" r="24.5" fill="#111" stroke="#ffd200" strokeWidth="2" />
          <circle cx="26.5" cy="35" r="22.5" fill="#cecece" />
          <circle cx="26.5" cy="35" r="14.5" fill="#d4d4d4" stroke="#999" />
          <path d="M26.5 12.5v8M4 35h8M41 35h8M26.5 49.5v8" stroke="#999" strokeWidth="1.5" />
          <path d="M21 34h12v6q-6 1.5-12 0z" fill="#d09640" />
          <path d="M21.5 29h11l2.5 3-2 2.5H20.5L18.5 32z" fill="#e2ab55" />
          <path d="M22 30.5h10v1.5H22zM21 35h12v1H21z" fill="#9a6a28" />
        </svg>
        <NodeText $drop={24}><span>layout1</span><Lock /></NodeText>
      </NodeBox>
    </Canvas>
  </NetworkPane>
);

export default function App() {
  return (
    <>
      <GlobalStyle />
      <Shell>
        <SceneView />
        <DisplayToolbar />
        <SplitV aria-hidden="true">
          <Tri d="M5 0v6L1 3z" />
          <Grip $v />
          <Tri d="M1 0v6l4-3z" />
        </SplitV>
        <SidePanes>
          <Parameters />
          <SplitH aria-hidden="true">
            <Tri d="M0 5h6L3 1z" />
            <Grip />
            <Tri d="M0 1h6L3 5z" />
          </SplitH>
          <Network />
        </SidePanes>
      </Shell>
    </>
  );
}
